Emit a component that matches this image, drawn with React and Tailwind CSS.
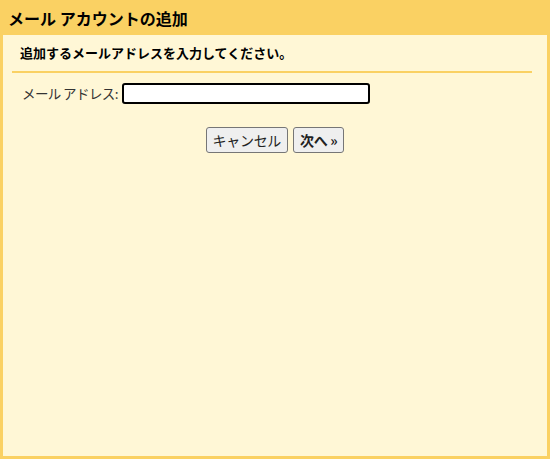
import React from "react";

const App = () => {
  return (
    <div
      className="w-[550px] h-[459px] bg-[#fad163] flex flex-col"
      style={{ fontFamily: '"Noto Sans CJK JP", "Noto Sans", sans-serif' }}
    >
      {/* Title bar */}
      <div className="h-[35px] flex items-center pl-[8px] text-[16px] font-bold text-black">
        メール アカウントの追加
      </div>

      {/* Body */}
      <div className="flex-1 mx-[3px] mb-[3px] bg-[#fff7d6] px-[9px]">
        <div className="h-[36px] flex items-center pl-[8px] text-[13px] font-bold text-black">
          追加するメールアドレスを入力してください。
        </div>
        <div className="h-[2px] bg-[#fad163] mr-[6px]" />

        <div className="flex items-center mt-[10px] pl-[10px]">
          <label className="text-[13.5px] tracking-[-0.6px] text-[#333]">メール アドレス:</label>
          <input
            type="text"
            autoFocus
            className="ml-[4px] w-[248px] h-[21px] border-2 border-black rounded-[3px] bg-white outline-none px-[2px] text-[13px]"
          />
        </div>

        <div className="flex justify-center gap-[5px] mt-[23px]">
          <button className="h-[26px] px-[6px] border border-[#767676] rounded-[3px] bg-[#efefef] text-[14px] tracking-[-0.3px] text-[#222]">
            キャンセル
          </button>
          <button className="h-[26px] px-[6px] border border-[#767676] rounded-[3px] bg-[#efefef] text-[14px] font-bold tracking-[-0.3px] text-[#222]">
            次へ »
          </button>
        </div>
      </div>
    </div>
  );
};

export default App;
